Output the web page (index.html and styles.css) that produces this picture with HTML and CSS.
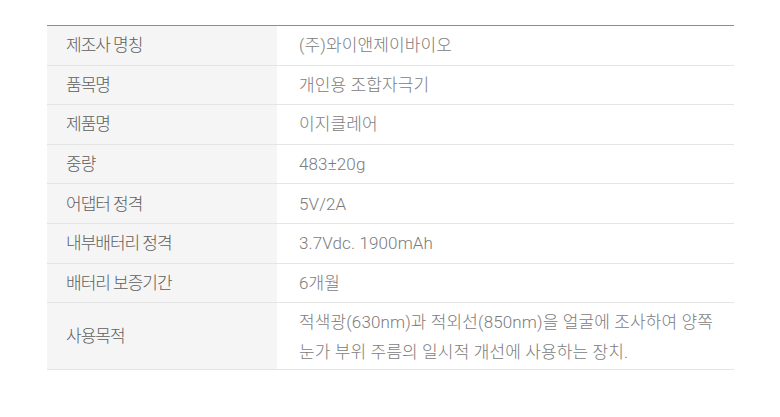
FILE: index.html
```html
<!DOCTYPE html>
<html lang="ko">
<head>
<meta charset="utf-8">
<link rel="stylesheet" href="styles.css">
</head>
<body>
<div class="wrap">
<table class="spec">
<tbody>
<tr><th>제조사 명칭</th><td>(주)와이앤제이바이오</td></tr>
<tr><th>품목명</th><td>개인용 조합자극기</td></tr>
<tr><th>제품명</th><td>이지클레어</td></tr>
<tr><th>중량</th><td>483±20g</td></tr>
<tr><th>어댑터 정격</th><td>5V/2A</td></tr>
<tr><th>내부배터리 정격</th><td>3.7Vdc. 1900mAh</td></tr>
<tr><th>배터리 보증기간</th><td>6개월</td></tr>
<tr class="tall"><th>사용목적</th><td>적색광(630nm)과 적외선(850nm)을 얼굴에 조사하여 양쪽<br>눈가 부위 주름의 일시적 개선에 사용하는 장치.</td></tr>
</tbody>
</table>
</div>
</body>
</html>
```
FILE: styles.css
```css
html, body { margin: 0; padding: 0; background: #fff; }
.wrap { padding: 25px 46px 0 47px; }
.spec {
  width: 687px;
  border-collapse: collapse;
  border-top: 1px solid #8c8c8c;
  font-family: Roboto, "Noto Sans CJK KR", sans-serif;
  font-size: 17px;
  font-weight: 300;
}
.spec tr { height: 39.6px; }
.spec th, .spec td {
  padding: 0;
  border-bottom: 1px solid #e4e4e4;
  vertical-align: middle;
  text-align: left;
  font-weight: 300;
  line-height: 30px;
}
.spec th {
  width: 211px;
  background: #f5f5f5;
  color: #5e5e5e;
  padding-left: 19px;
  letter-spacing: -1px;
}
.spec td {
  color: #7c7c7c;
  padding-left: 22px;
  letter-spacing: 0.12px;
}
.spec tr.tall { height: 67px; }
.spec tr.tall td { padding-top: 1px; }
```
